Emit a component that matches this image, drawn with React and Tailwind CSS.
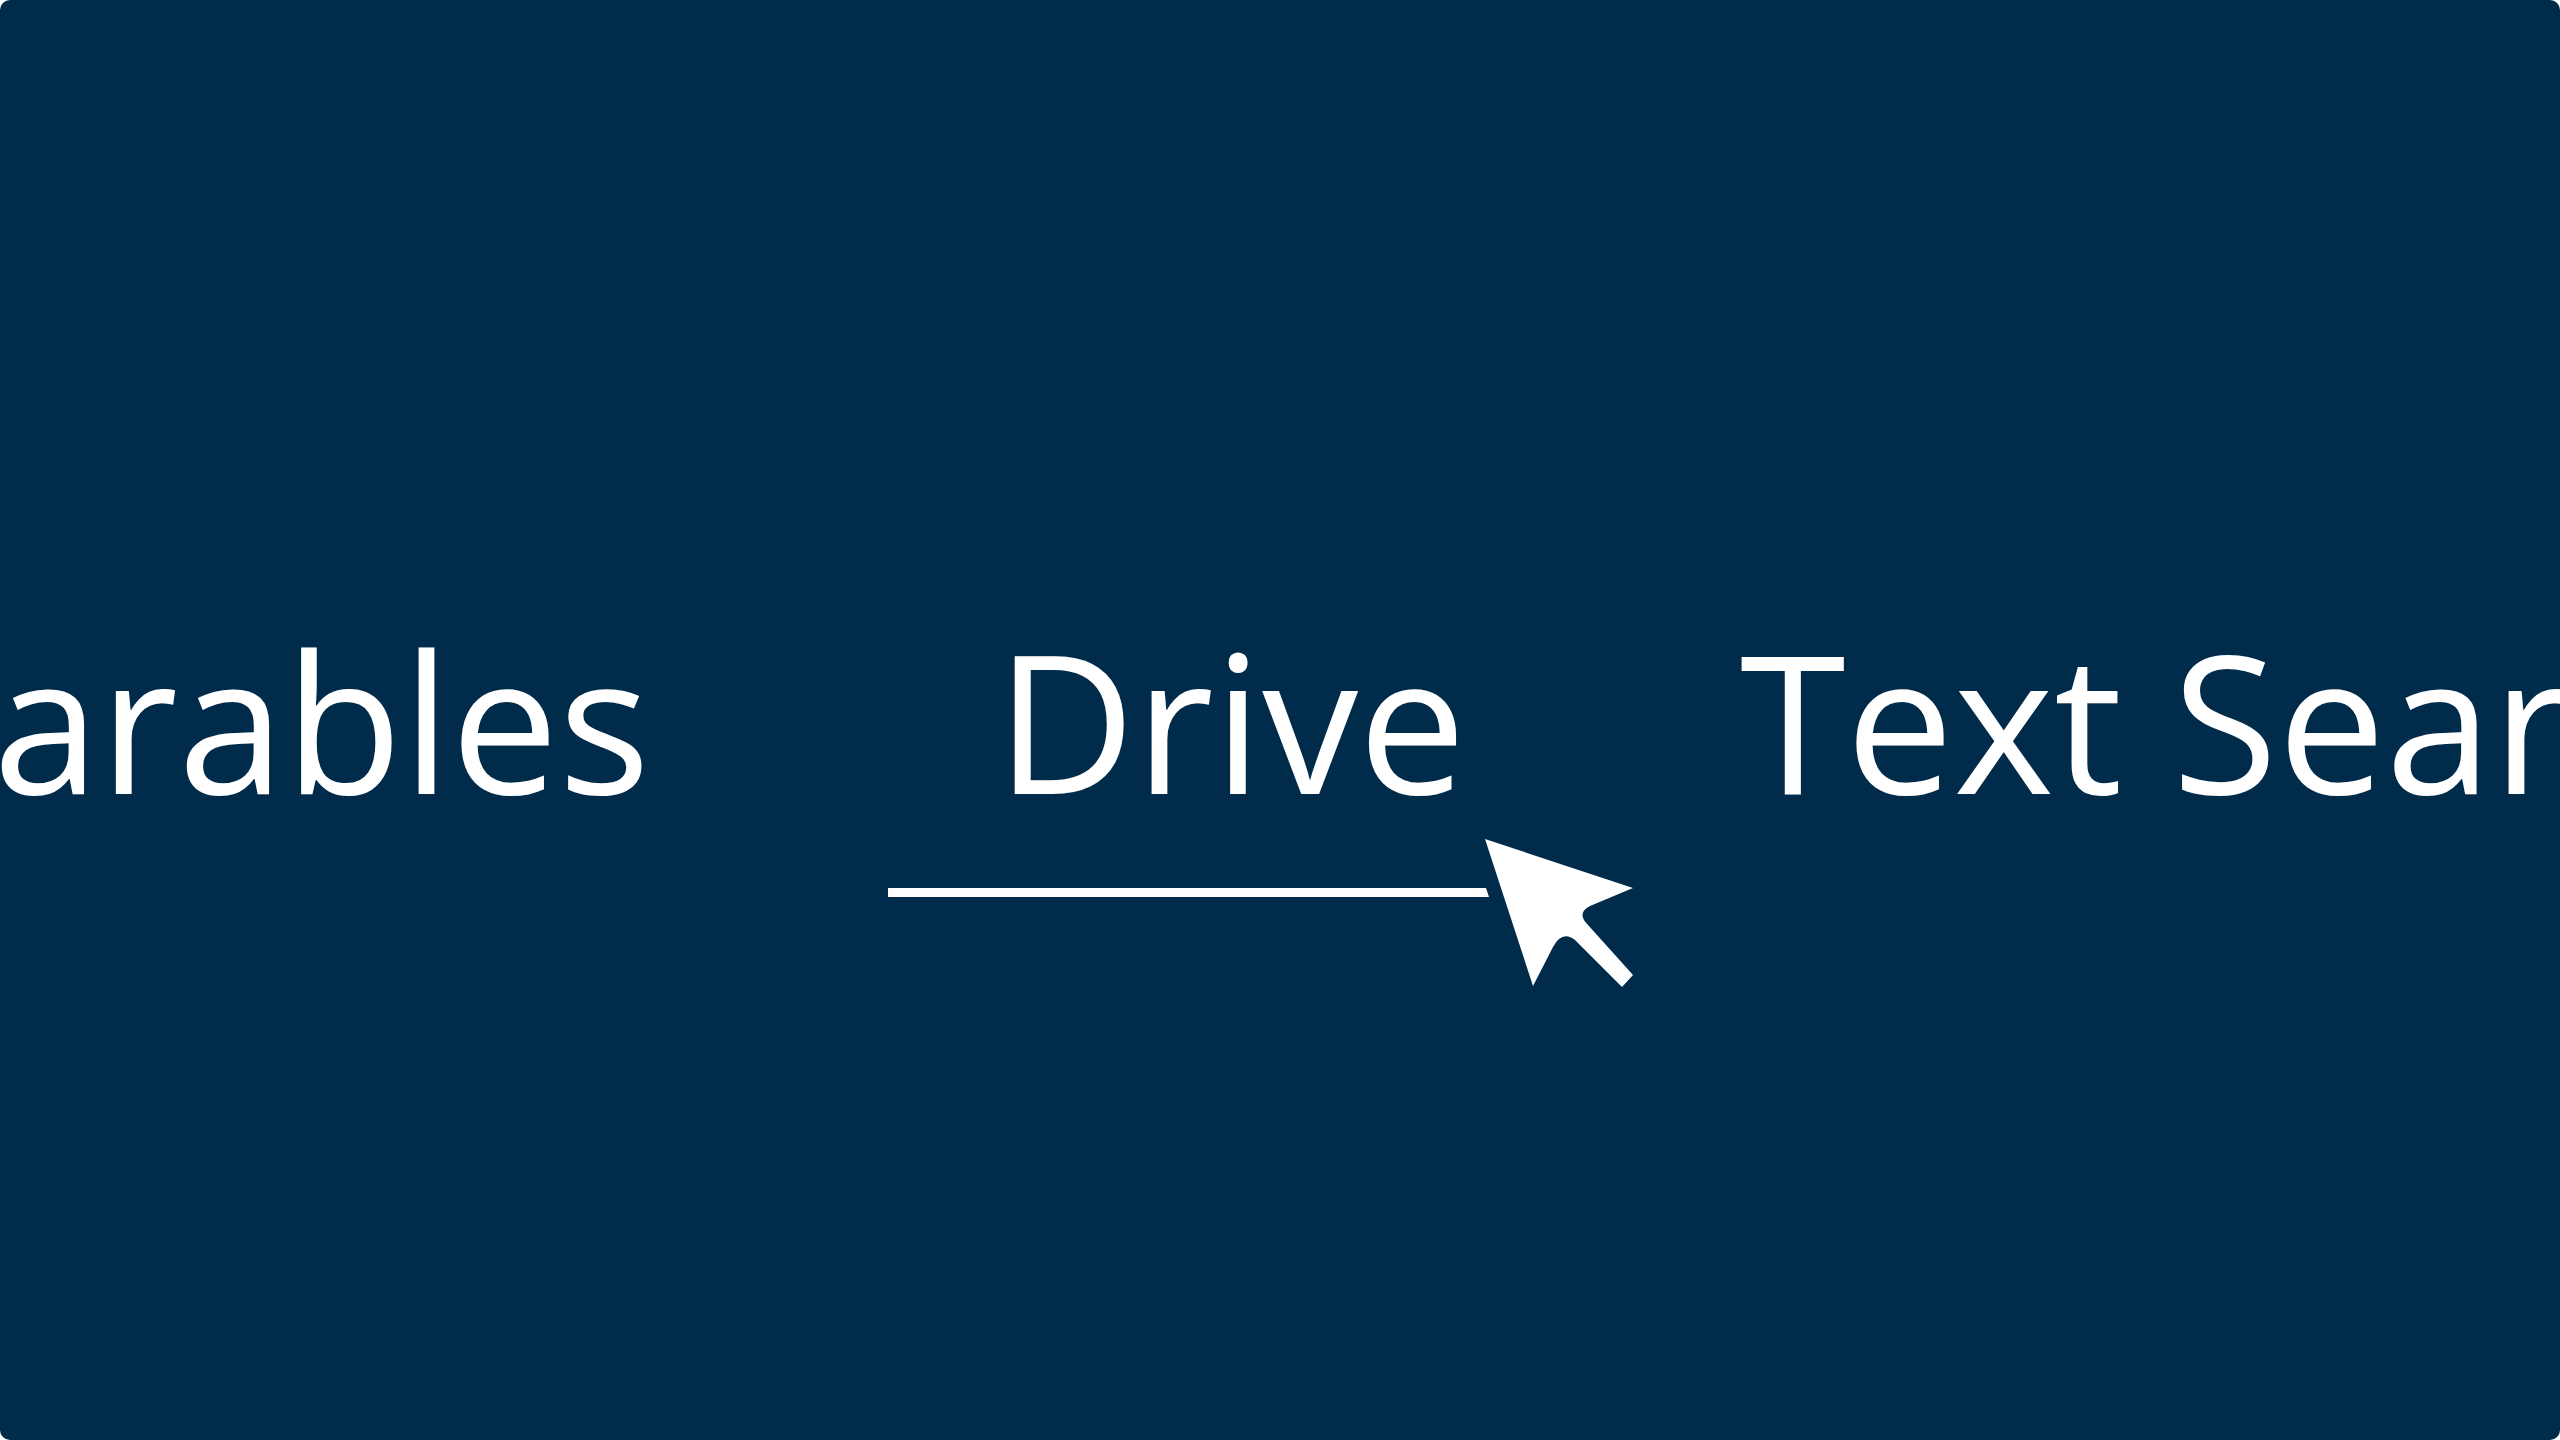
export default function App() {
  return (
    <div className="h-screen w-full overflow-hidden rounded-[10px] bg-[#002b4a] pt-[624px] font-['Open_Sans',sans-serif] text-white">
      {/* carousel row, centred on the active item */}
      <div className="flex whitespace-nowrap text-[192px] leading-none">
        <div className="flex w-[650px] shrink-0 justify-end">arables</div>
        <div className="ml-[346px] shrink-0">Drive</div>
        <div className="ml-[274px] shrink-0">Text Search</div>
      </div>

      {/* underline + pointer */}
      <svg
        className="ml-[886px] mt-[20px] block"
        width="752"
        height="154"
        viewBox="886 836 752 154"
        fill="#ffffff"
      >
        <polygon points="888,888 1486,888 1489,897 888,897" />
        <path d="M1485 839 L1633 888 L1590 906 Q1576 913 1588 925 L1633 975 L1622 987 L1575 940 Q1562 930 1553 947 L1533 986 Z" />
      </svg>
    </div>
  )
}
